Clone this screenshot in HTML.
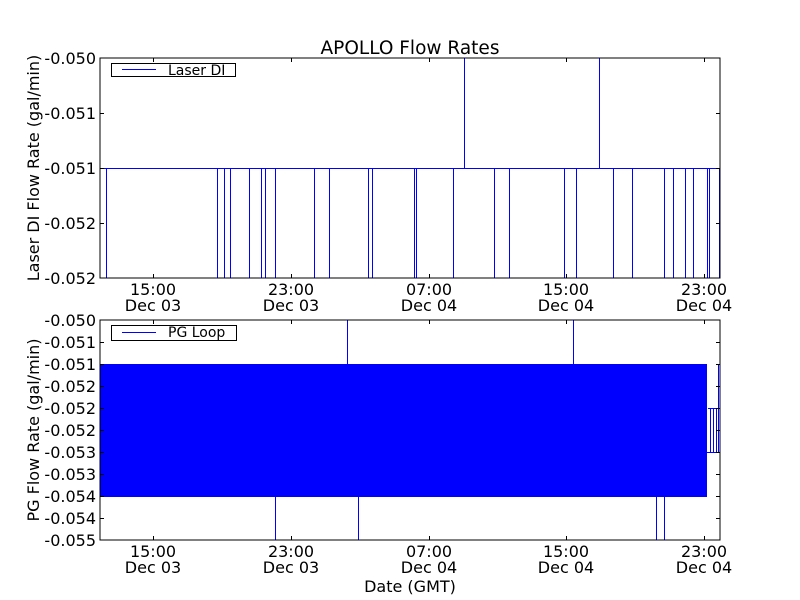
<!DOCTYPE html>
<html><head><meta charset="utf-8"><style>
html,body{margin:0;padding:0;background:#fff;width:800px;height:600px;overflow:hidden}
svg text{font-family:"DejaVu Sans","Liberation Sans",sans-serif;fill:#000}
</style></head><body>
<svg width="800" height="600" viewBox="0 0 800 600" xmlns="http://www.w3.org/2000/svg">
<rect width="800" height="600" fill="#fff"/>
<text x="410" y="54" font-size="18.5" text-anchor="middle">APOLLO Flow Rates</text>
<g stroke="#0000ff" stroke-width="1" fill="none">
<line x1="100" y1="168.5" x2="720" y2="168.5"/>
<path d="M106.5 168V278M217.5 168V278M224.5 168V278M230.5 168V278M249.5 168V278M261.5 168V278M265.5 168V278M275.5 168V278M314.5 168V278M329.5 168V278M368.5 168V278M372.5 168V278M414.5 168V278M416.5 168V278M453.5 168V278M494.5 168V278M509.5 168V278M564.5 168V278M576.5 168V278M613.5 168V278M632.5 168V278M664.5 168V278M673.5 168V278M685.5 168V278M693.5 168V278M707.5 168V278M709.5 168V278M719.5 168V278"/>
<path d="M464.5 58V168M599.5 58V168"/>
</g>
<rect x="100" y="58" width="620" height="220" fill="none" stroke="#000" stroke-width="1"/>
<g stroke="#000" stroke-width="1">
<path d="M153.5 58v4M153.5 278v-4M291.5 58v4M291.5 278v-4M429.5 58v4M429.5 278v-4M566.5 58v4M566.5 278v-4M704.5 58v4M704.5 278v-4"/>
<path d="M100 113.5h4M720 113.5h-4M100 168.5h4M720 168.5h-4M100 223.5h4M720 223.5h-4"/>
</g>
<rect x="111.5" y="63.5" width="124" height="13" fill="#fff" stroke="#000"/>
<line x1="122" y1="69.5" x2="156" y2="69.5" stroke="#0000ff"/>
<text x="168" y="75" font-size="14">Laser DI</text>
<g font-size="16" text-anchor="end">
<text x="96" y="64">-0.050</text><text x="96" y="119">-0.051</text><text x="96" y="174">-0.051</text><text x="96" y="229">-0.052</text><text x="96" y="284">-0.052</text>
</g>
<g font-size="16" text-anchor="middle">
<text x="153" y="295">15:00</text><text x="153" y="311">Dec 03</text>
<text x="291" y="295">23:00</text><text x="291" y="311">Dec 03</text>
<text x="429" y="295">07:00</text><text x="429" y="311">Dec 04</text>
<text x="566" y="295">15:00</text><text x="566" y="311">Dec 04</text>
<text x="704" y="295">23:00</text><text x="704" y="311">Dec 04</text>
</g>
<text transform="translate(39,168) rotate(-90)" font-size="16" text-anchor="middle">Laser DI Flow Rate (gal/min)</text>

<rect x="100" y="364" width="607" height="133" fill="#0000ff"/>
<g stroke="#0000ff" stroke-width="1" fill="none">
<path d="M347.5 320V364M573.5 320V364M275.5 497V540M358.5 497V540M656.5 497V540M664.5 497V540"/>
<path d="M707 452.5H719M710.5 408V452M713.5 408V452M716.5 408V452M708 408.5H717M718.5 364V452"/>
</g>
<rect x="100" y="320" width="620" height="220" fill="none" stroke="#000" stroke-width="1"/>
<g stroke="#000" stroke-width="1">
<path d="M153.5 320v4M153.5 540v-4M291.5 320v4M291.5 540v-4M429.5 320v4M429.5 540v-4M566.5 320v4M566.5 540v-4M704.5 320v4M704.5 540v-4"/>
<path d="M100 342.5h4M720 342.5h-4M100 364.5h4M720 364.5h-4M100 386.5h4M720 386.5h-4M100 408.5h4M720 408.5h-4M100 430.5h4M720 430.5h-4M100 452.5h4M720 452.5h-4M100 474.5h4M720 474.5h-4M100 496.5h4M720 496.5h-4M100 518.5h4M720 518.5h-4"/>
</g>
<rect x="111.5" y="325.5" width="125" height="15" fill="#fff" stroke="#000"/>
<line x1="122" y1="332.5" x2="156" y2="332.5" stroke="#0000ff"/>
<text x="168" y="337" font-size="14">PG Loop</text>
<g font-size="16" text-anchor="end">
<text x="96" y="326">-0.050</text><text x="96" y="348">-0.051</text><text x="96" y="370">-0.051</text><text x="96" y="392">-0.052</text><text x="96" y="414">-0.052</text><text x="96" y="436">-0.052</text><text x="96" y="458">-0.053</text><text x="96" y="480">-0.053</text><text x="96" y="502">-0.054</text><text x="96" y="524">-0.054</text><text x="96" y="546">-0.055</text>
</g>
<g font-size="16" text-anchor="middle">
<text x="153" y="557">15:00</text><text x="153" y="573">Dec 03</text>
<text x="291" y="557">23:00</text><text x="291" y="573">Dec 03</text>
<text x="429" y="557">07:00</text><text x="429" y="573">Dec 04</text>
<text x="566" y="557">15:00</text><text x="566" y="573">Dec 04</text>
<text x="704" y="557">23:00</text><text x="704" y="573">Dec 04</text>
</g>
<text x="410" y="592" font-size="16" text-anchor="middle">Date (GMT)</text>
<text transform="translate(39,430) rotate(-90)" font-size="16" text-anchor="middle">PG Flow Rate (gal/min)</text>
</svg>
</body></html>
